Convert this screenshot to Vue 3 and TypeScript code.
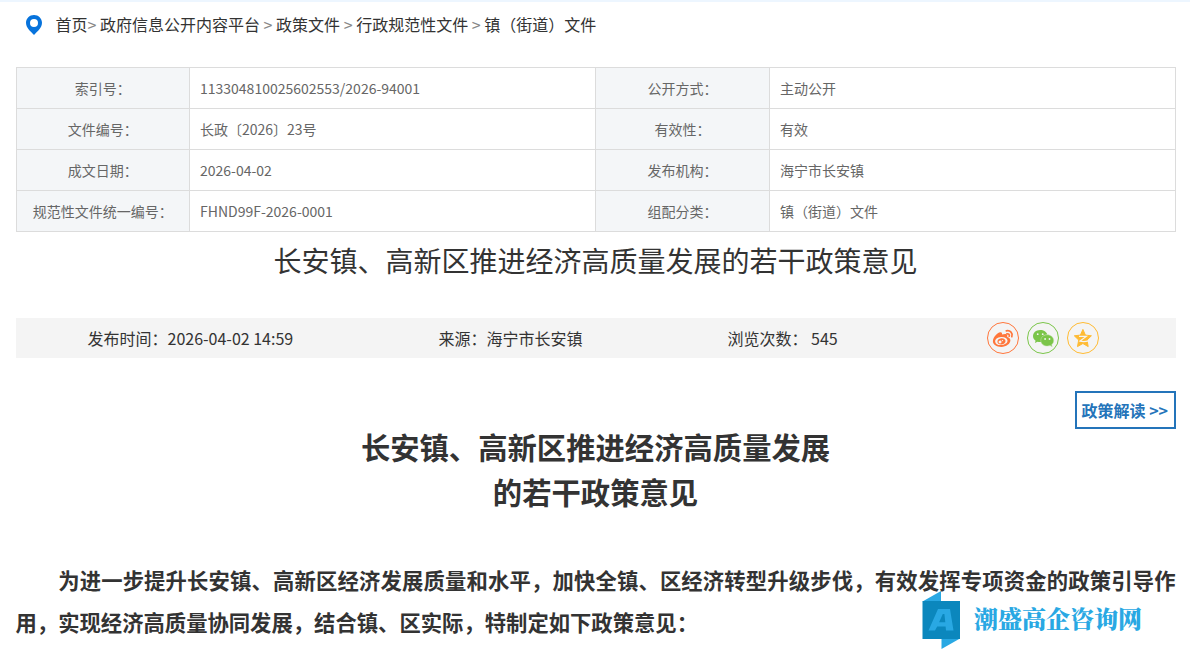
<script setup lang="ts">
interface MetaRow {
  label: string
  value: string
  label2: string
  value2: string
}

const crumbs: string[] = ['政府信息公开内容平台', '政策文件', '行政规范性文件', '镇（街道）文件']

const rows: MetaRow[] = [
  { label: '索引号：', value: '113304810025602553/2026-94001', label2: '公开方式：', value2: '主动公开' },
  { label: '文件编号：', value: '长政〔2026〕23号', label2: '有效性：', value2: '有效' },
  { label: '成文日期：', value: '2026-04-02', label2: '发布机构：', value2: '海宁市长安镇' },
  { label: '规范性文件统一编号：', value: 'FHND99F-2026-0001', label2: '组配分类：', value2: '镇（街道）文件' },
]
</script>

<template>
  <div class="page">
    <nav class="crumbs">
      <svg class="pin" width="16" height="20" viewBox="0 0 16 20">
        <path fill="#0773dc" fill-rule="evenodd" d="M8 0C3.500 0 0 3.400 0 7.800C0 12.600 4.200 16.200 8 20C11.800 16.200 16 12.600 16 7.800C16 3.400 12.500 0 8 0ZM8 3.900a4 4 0 1 1 0 8a4 4 0 1 1 0-8Z" />
      </svg>
      <div class="trail"><span>首页</span><template v-for="(c, i) in crumbs" :key="c"><i>{{ i === 0 ? '> ' : ' > ' }}</i><span>{{ c }}</span></template></div>
    </nav>

    <table class="meta">
      <colgroup>
        <col class="c1" />
        <col class="c2" />
        <col class="c3" />
        <col class="c2" />
      </colgroup>
      <tbody>
        <tr v-for="r in rows" :key="r.label">
          <th>{{ r.label }}</th>
          <td>{{ r.value }}</td>
          <th>{{ r.label2 }}</th>
          <td>{{ r.value2 }}</td>
        </tr>
      </tbody>
    </table>

    <h1 class="title">长安镇、高新区推进经济高质量发展的若干政策意见</h1>

    <div class="info">
      <div class="time">发布时间：2026-04-02 14:59</div>
      <div class="source">来源：海宁市长安镇</div>
      <div class="views">浏览次数： 545</div>
      <div class="share">
        <svg width="32" height="32" viewBox="0 0 32 32">
          <circle cx="16" cy="16" r="15.500" fill="none" stroke="#ff763b" />
          <path fill="#ff763b" fill-rule="evenodd" d="M13.300 10.300C15 10.100 15.300 11.400 14.900 12.600C17.200 11.700 20.300 11.500 20.300 13.600C20.300 14.200 20 14.700 20.300 14.900C22 15.400 23.400 16.400 23.400 18.300C23.400 21.800 19.200 24.900 14.300 24.900C9.500 24.900 5.900 22.500 5.900 19.200C5.900 15.600 10.300 10.600 13.300 10.300ZM14 15.100C10.300 15.400 7.900 17.400 8.200 19.700C8.500 22 11.200 23.400 14.600 23C18 22.700 20.700 20.700 20.500 18.400C20.300 16.200 17.500 14.800 14 15.100Z" />
          <path fill="#ff763b" fill-rule="evenodd" d="M14.200 16.200c2.500-.4 4.400 1.100 4.300 3c-.1 1.900-2 3.300-4.200 3.400c-2.300.1-4-1.300-3.900-3.100c.1-1.700 1.700-3 3.800-3.300ZM13 18.600a1.500 1.400 0 1 0 .1 2.800a1.500 1.400 0 1 0-.1-2.800ZM15.500 17.900a.7.700 0 1 0 0 1.400a.7.700 0 1 0 0-1.400Z" />
          <path fill="none" stroke="#ff763b" stroke-width="1.700" stroke-linecap="round" d="M19.300 8.900C23.300 8 26.100 11.100 24.800 14.600M19.900 11.900C21.800 11.500 22.800 12.700 22.200 14.200" />
        </svg>
        <svg width="32" height="32" viewBox="0 0 32 32">
          <circle cx="16" cy="16" r="15.500" fill="none" stroke="#7bc549" />
          <path fill="#7bc549" d="M13.200 8C8.900 8 6 10.800 6 14.100C6 16.100 7 17.700 8.600 18.800L7.900 21L10.500 19.700C12 20.200 13.500 20.200 14.700 20C13.600 15.900 16.500 12.700 20.300 12.500C19.600 9.900 16.800 8 13.200 8Z" />
          <path fill="#7bc549" stroke="#c4e2b1" stroke-width=".5" d="M20.200 12.800C16.700 12.800 13.800 15.200 13.800 18.400C13.800 21.700 16.800 24.100 20.300 24.100C21.300 24.100 22.300 23.900 23.100 23.600L25.200 24.800L24.700 22.700C26 21.600 26.700 20.100 26.700 18.500C26.700 15.200 23.700 12.800 20.200 12.800Z" />
          <g fill="#f4f4f4"><circle cx="10.700" cy="12.200" r=".9" /><circle cx="15.700" cy="12.200" r=".9" /><circle cx="18.100" cy="17" r=".9" /><circle cx="22.500" cy="17" r=".9" /></g>
        </svg>
        <svg width="32" height="32" viewBox="0 0 32 32">
          <circle cx="16" cy="16" r="15.500" fill="none" stroke="#ffbb33" />
          <path fill="#ffbb33" stroke="#ffbb33" stroke-linejoin="round" d="M15.900 7.400L18.400 13.100L24.400 13.800L20 18L21.200 24.600L15.900 21.500L10.500 24.600L11.700 18L7.300 13.800L13.400 13.100Z" />
          <path fill="none" stroke="#f4f4f4" stroke-width="1.200" d="M12 14.400H19.300L13 19.100C15.300 19.700 18.500 19.700 21.500 18.900" />
        </svg>
      </div>
    </div>

    <div class="actions"><a class="interpret">政策解读 &gt;&gt;</a></div>

    <article>
      <h2>长安镇、高新区推进经济高质量发展<br />的若干政策意见</h2>
      <p>为进一步提升长安镇、高新区经济发展质量和水平，加快全镇、区经济转型升级步伐，有效发挥专项资金的政策引导作用，实现经济高质量协同发展，结合镇、区实际，特制定如下政策意见：</p>
    </article>

    <div class="watermark">
      <svg width="38" height="58" viewBox="0 0 38 58">
        <path fill="#29a8e3" d="M0.500 10.500L19 0V10.500ZM19.500 47.500H38L19.500 58Z" />
        <path fill="#0b87bd" d="M0.500 10H38V48H0.500Z" />
        <path fill="#29a8e3" fill-rule="evenodd" d="M16 18H28L31.500 39.500H24L23.600 35.500H15.200L13 39.500H6.500ZM20.800 23L17.100 31.300H23.300L22.400 23Z" />
      </svg>
      <span>潮盛高企咨询网</span>
    </div>
  </div>
</template>

<style>
body {
  margin: 0;
  background: #fff;
  overflow: hidden;
}
</style>

<style scoped>
.page {
  position: relative;
  box-sizing: border-box;
  width: 1190px;
  height: 654px;
  padding: 0 14.500px 0 15.500px;
  border-top: 2px solid #edf6ff;
  overflow: hidden;
  font-family: "Noto Sans CJK SC", sans-serif;
  color: #333;
}
.crumbs {
  display: flex;
  align-items: center;
  height: 46px;
  padding-left: 10.500px;
  font-size: 16px;
}
.pin {
  margin-right: 13.500px;
}
.trail {
  margin-top: -2px;
  white-space: pre;
}
.trail i {
  font-style: normal;
  color: #888;
}
.meta {
  width: 1160px;
  margin-top: 19px;
  border-collapse: collapse;
  table-layout: fixed;
  font-size: 14px;
  color: #666;
}
.c1 {
  width: 173.500px;
}
.c2 {
  width: 406px;
}
.c3 {
  width: 174px;
}
.meta th,
.meta td {
  box-sizing: border-box;
  height: 41px;
  padding: 0 10px;
  border: 1px solid #dcdcdc;
  line-height: 20px;
  font-weight: 400;
}
.meta th {
  padding: 0;
  background: #f4f6f8;
  text-align: center;
}
.meta td {
  text-align: left;
}
.title {
  margin: 7px 0 0;
  font-size: 28px;
  line-height: 42px;
  font-weight: 400;
  text-align: center;
}
.info {
  display: grid;
  grid-template-columns: 351px 289px 259.500px 1fr;
  align-items: center;
  height: 40px;
  margin-top: 37px;
  padding-left: 72px;
  background: #f4f4f4;
  font-size: 16px;
}
.share {
  display: flex;
  gap: 8px;
}
.actions {
  display: flex;
  justify-content: flex-end;
  margin-top: 33px;
}
.interpret {
  box-sizing: border-box;
  width: 101px;
  height: 38px;
  padding-left: 5px;
  border: 2px solid #2474ba;
  color: #2474ba;
  font-size: 16px;
  line-height: 35px;
  font-weight: 700;
  white-space: nowrap;
}
h2 {
  margin: -5px 0 0;
  font-size: 29.333px;
  line-height: 45px;
  font-weight: 700;
  text-align: center;
}
p {
  margin: 45px 0 0;
  font-size: 21.333px;
  line-height: 42px;
  font-weight: 700;
  text-align: justify;
  text-indent: 2em;
}
.watermark {
  position: absolute;
  left: 922px;
  top: 589px;
  display: flex;
  align-items: center;
  gap: 14px;
  color: #29a8e3;
  font-family: "Noto Serif CJK SC", "Source Han Serif SC", "Noto Sans CJK SC", serif;
  font-size: 24px;
  line-height: 24px;
  font-weight: 900;
  white-space: nowrap;
}
.watermark span {
  margin-top: -4px;
}
</style>
